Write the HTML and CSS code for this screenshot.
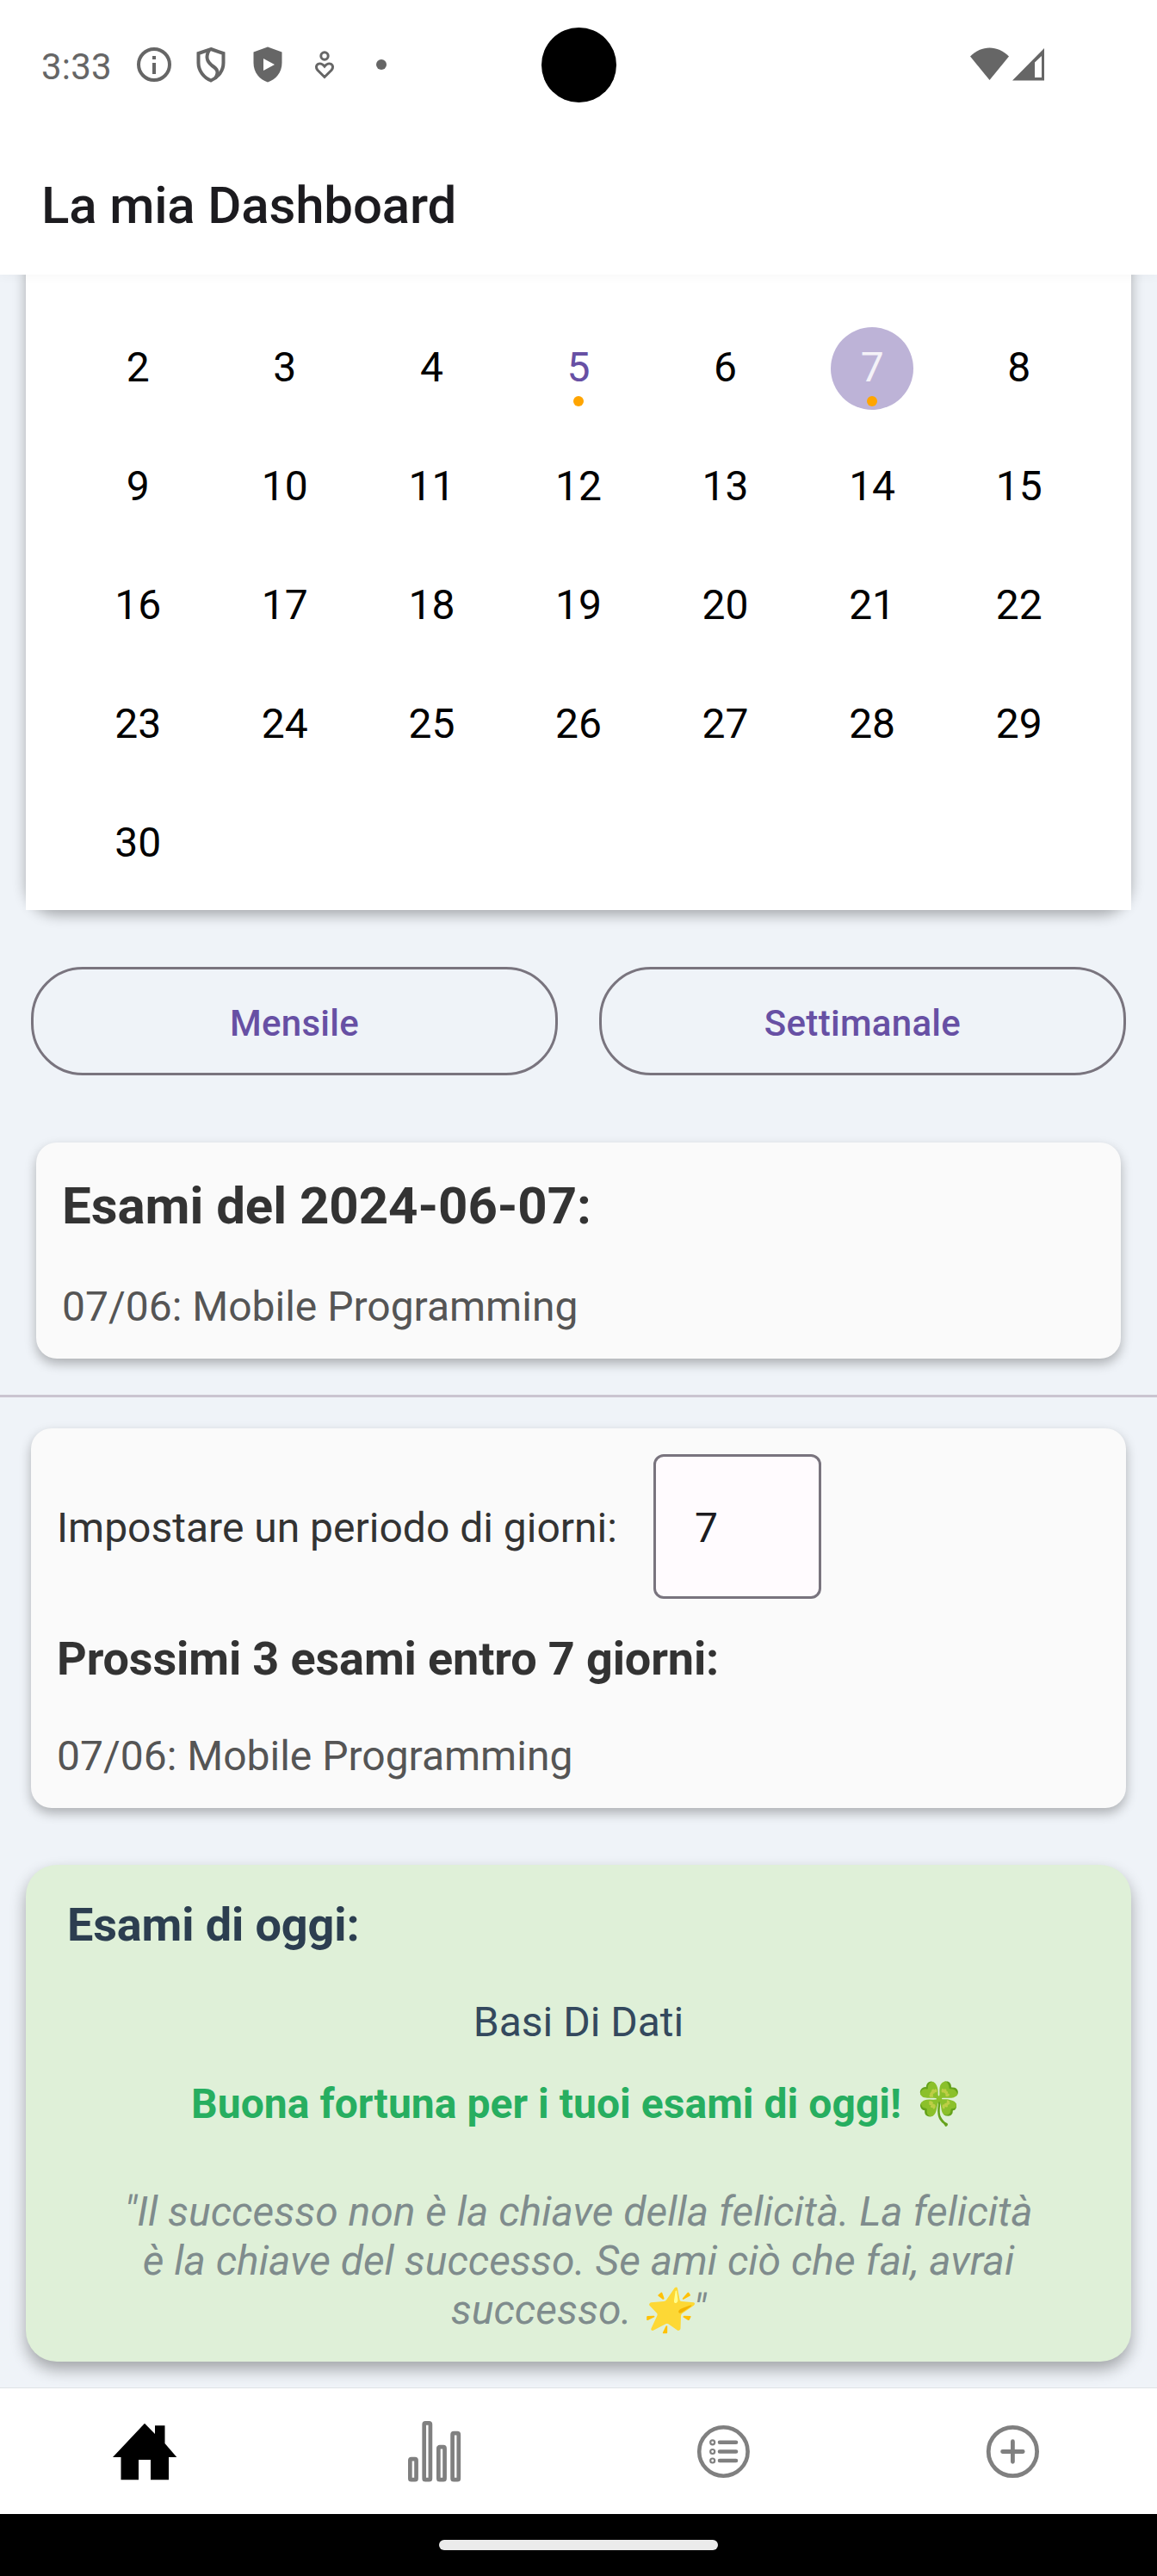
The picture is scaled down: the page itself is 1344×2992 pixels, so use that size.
FILE: index.html
```html
<!DOCTYPE html>
<html lang="it">
<head>
<meta charset="utf-8">
<title>La mia Dashboard</title>
<link rel="stylesheet" href="styles.css">
</head>
<body>
<div class="screen">
  <div class="status">
    <span class="clock">3:33</span>
    <svg class="status-icons" width="310" height="48" viewBox="0 0 310 48" fill="none" stroke="#666" stroke-width="4">
      <circle cx="29" cy="24" r="18"/>
      <path fill="#666" stroke="none" d="M27 14h4v4h-4zM27 22h4v13h-4z"/>
      <path d="M95 6l14.500 5v11c0 9-6 17-14.500 20.500c-8.500-3.500-14.500-11.500-14.500-20.500v-11z"/>
      <path d="M93 7c-5 9-2 14 3 18c6 4 9 7 4 15"/>
      <path fill="#666" stroke="none" d="M161 3.500l16.500 6v12.500c0 11-7 19.500-16.500 22.500c-9.500-3-16.500-11.500-16.500-22.500v-12.500zM156 17v14l13-7z"/>
      <circle cx="227" cy="14" r="4.200" stroke-width="3"/>
      <path stroke-width="3" d="M227 38.500l-8-8c-5-6 3-11 8-4.500c5-6.500 13-1.500 8 4.500z"/>
      <circle cx="293" cy="24" r="6" fill="#666" stroke="none"/>
    </svg>
    <div class="camera"></div>
    <svg class="signal" width="88" height="40" viewBox="0 0 88 40" fill="#666">
      <path d="M0 10.500C13-3 32-3 45 10.500L22.500 38z"/>
      <path fill-rule="evenodd" d="M49 38.500L86 1v37.500zM75 17.500v17.500h8V10z"/>
    </svg>
  </div>
  <header class="appbar"><h1>La mia Dashboard</h1></header>

  <main class="content">
    <section class="calendar">
      <span>2</span><span>3</span><span>4</span><span class="today marked">5</span><span>6</span><span class="selected marked">7</span><span>8</span>
      <span>9</span><span>10</span><span>11</span><span>12</span><span>13</span><span>14</span><span>15</span>
      <span>16</span><span>17</span><span>18</span><span>19</span><span>20</span><span>21</span><span>22</span>
      <span>23</span><span>24</span><span>25</span><span>26</span><span>27</span><span>28</span><span>29</span>
      <span>30</span>
    </section>

    <div class="modes">
      <button class="mode">Mensile</button>
      <button class="mode">Settimanale</button>
    </div>

    <section class="card day-card">
      <h2>Esami del 2024-06-07:</h2>
      <p class="exam">07/06: Mobile Programming</p>
    </section>

    <div class="divider"></div>

    <section class="card period-card">
      <div class="period">
        <label>Impostare un periodo di giorni:</label>
        <div class="days">7</div>
      </div>
      <h3>Prossimi 3 esami entro 7 giorni:</h3>
      <p class="exam">07/06: Mobile Programming</p>
    </section>

    <section class="today-card">
      <h3>Esami di oggi:</h3>
      <p class="subject">Basi Di Dati</p>
      <p class="luck">Buona fortuna per i tuoi esami di oggi! <span class="emoji">🍀</span></p>
      <p class="quote">"Il successo non è la chiave della felicità. La felicità<br>è la chiave del successo. Se ami ciò che fai, avrai<br>successo. <span class="emoji">🌟</span>"</p>
    </section>
  </main>

  <nav class="tabs">
    <svg width="76" height="76" viewBox="0 0 76 76"><path d="M38 5.800L50 18V8.300H61.500V29L75.300 45H66V71.300H45V48H31V71.300H10.500V45H1z"/></svg>
    <svg width="76" height="76" viewBox="0 0 76 76" fill="none" stroke="#808080" stroke-width="4.700"><rect x="10.350" y="47.200" width="7.200" height="24" rx="1.500"/><rect x="26.700" y="5.300" width="7.200" height="65.900" rx="1.500"/><rect x="43.350" y="33.200" width="7.200" height="38" rx="1.500"/><rect x="59.600" y="17.200" width="7.200" height="54" rx="1.500"/></svg>
    <svg width="76" height="76" viewBox="0 0 76 76" fill="none" stroke="#808080" stroke-width="4.600" stroke-linecap="round"><circle cx="38.400" cy="38.500" r="28.200"/><path d="M34 27.800h19M34 38.500h19M34 49h19"/><g stroke-width="2.200"><circle cx="25.700" cy="27.800" r="2.500"/><circle cx="25.700" cy="38.500" r="2.500"/><circle cx="25.700" cy="49" r="2.500"/></g></svg>
    <svg width="76" height="76" viewBox="0 0 76 76" fill="none" stroke="#808080" stroke-width="4.800" stroke-linecap="round"><circle cx="38.400" cy="38.500" r="28.200"/><path d="M26.600 38.500h23.600M38.400 26.700v23.600"/></svg>
  </nav>
  <div class="gesture"><div class="handle"></div></div>
</div>
</body>
</html>
```
FILE: styles.css
```css
* { box-sizing: border-box; margin: 0; padding: 0; }
body { width: 1344px; height: 2992px; overflow: hidden; font-family: Roboto, "Liberation Sans", sans-serif; }
.screen { display: flex; flex-direction: column; width: 1344px; height: 2992px; background: #eff3f8; }

.status { position: relative; display: flex; align-items: center; height: 157px; padding: 0 129px 7px 48px; background: #fff; color: #666; z-index: 2; }
.clock { width: 102px; font-size: 42px; line-height: 48px; margin-top: 5px; letter-spacing: .2px; }
.camera { position: absolute; left: 628.5px; top: 31.5px; width: 87px; height: 87px; border-radius: 50%; background: #000; }
.signal { margin-left: auto; }

.appbar { display: flex; align-items: center; height: 162px; padding-left: 48px; background: #fff; position: relative; z-index: 1; box-shadow: 0 3px 12px rgba(0, 0, 0, .03); }
h1 { font-size: 60px; font-weight: 500; line-height: 72px; letter-spacing: -.17px; color: #1c1b1f; padding-top: 1px; }

.content { display: flex; flex-direction: column; height: 2454px; isolation: isolate; }
.calendar { position: relative; display: grid; grid-template-columns: repeat(7, 1fr); grid-auto-rows: 96px; row-gap: 42px; justify-items: center; height: 738px; margin: 0 30px; padding: 61px 45px 0; background: #fff; }
/* The shadow follows rounded corners while the sheet itself stays square. */
.calendar::before { content: ""; position: absolute; inset: -40px 0 0; z-index: -1; border-radius: 36px; box-shadow: 0 6px 15px rgba(0, 0, 0, .3); }
.calendar span { display: flex; align-items: center; justify-content: center; position: relative; width: 96px; height: 96px; padding-bottom: 3px; border-radius: 50%; font-size: 48px; color: #000; }
.calendar .today { color: #6750a4; }
.calendar .selected { background: #bdb3d7; color: #f4f2f8; }
.calendar .marked::after { content: ""; position: absolute; left: 42px; top: 80px; width: 12px; height: 12px; border-radius: 50%; background: #ffa500; }

.modes { display: flex; gap: 48px; margin: 66px 36px 0; }
.mode { flex: 1; height: 126px; padding-top: 5px; border: 3px solid #79747e; border-radius: 60px; background: none; font: 500 42px Roboto, sans-serif; letter-spacing: .3px; color: #6750a4; }

.card { background: #fafafa; border-radius: 24px; box-shadow: 0 6px 13px rgba(0, 0, 0, .28); color: #333; }
.day-card { height: 251px; margin: 78px 42px 0; padding: 38px 30px 0; }
h2 { font-size: 60px; line-height: 72px; letter-spacing: -.05px; }
.exam { font-size: 48px; line-height: 57px; color: #555; }
.day-card .exam { margin-top: 52px; }

.divider { height: 3px; margin-top: 42px; background: #cac4d0; }

.period-card { height: 441px; margin: 36px 36px 0; padding: 30px; }
.period { display: flex; align-items: center; gap: 42px; font-size: 48px; }
.period label { padding-top: 3px; }
.days { width: 195px; height: 168px; padding: 2px 0 0 45px; line-height: 162px; border: 3px solid #79747e; border-radius: 12px; background: #fffbfe; color: #1c1b1f; }
h3 { font-size: 54px; line-height: 64px; letter-spacing: -.13px; }
.period-card h3 { margin-top: 38px; }
.period-card .exam { margin-top: 52px; }

.today-card { height: 577px; margin: 66px 30px 0; padding: 38px 48px 0; border-radius: 36px; background: #dff0d8; box-shadow: 0 9px 18px rgba(0, 0, 0, .32); font-size: 48px; line-height: 57px; text-align: center; color: #34495e; }
.today-card h3 { text-align: left; line-height: 64px; color: #2c3e50; }
.subject { margin-top: 52px; }
.luck { height: 57px; margin-top: 38px; font-weight: 700; letter-spacing: .04px; color: #27ae60; }
.luck .emoji { margin: 0 1px 0 2px; }
.quote { margin-top: 68px; font-style: italic; color: #7f8c8d; }
.emoji { font-family: "Noto Color Emoji", sans-serif; line-height: 1; }

.tabs { position: relative; display: grid; grid-template-columns: repeat(4, 1fr); align-items: center; justify-items: center; height: 147px; border-top: 1px solid #dfe2e6; background: #fff; }
.gesture { display: flex; justify-content: center; height: 72px; padding-top: 30px; background: #000; }
.handle { width: 324px; height: 12px; border-radius: 6px; background: #ebebeb; }
```
